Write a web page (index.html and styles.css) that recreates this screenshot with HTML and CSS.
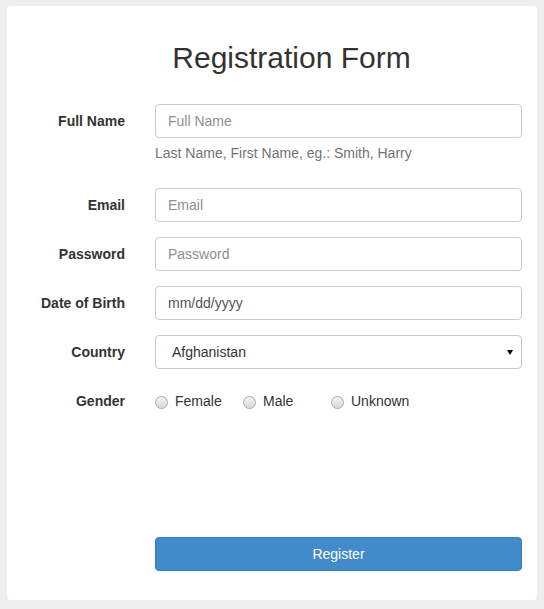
FILE: index.html
```html
<!DOCTYPE html>
<html>
<head>
<meta charset="utf-8">
<link rel="stylesheet" href="styles.css">
</head>
<body>
<div class="card">
  <h2 class="title">Registration Form</h2>
  <form class="form">
    <div class="row">
      <label class="lbl">Full Name</label>
      <div class="ctl">
        <input class="input" type="text" placeholder="Full Name">
        <span class="help">Last Name, First Name, eg.: Smith, Harry</span>
      </div>
    </div>
    <div class="row">
      <label class="lbl">Email</label>
      <div class="ctl"><input class="input" type="text" placeholder="Email"></div>
    </div>
    <div class="row">
      <label class="lbl">Password</label>
      <div class="ctl"><input class="input" type="text" placeholder="Password"></div>
    </div>
    <div class="row">
      <label class="lbl">Date of Birth</label>
      <div class="ctl"><div class="input date">mm/dd/yyyy</div></div>
    </div>
    <div class="row">
      <label class="lbl">Country</label>
      <div class="ctl"><div class="input select"><span>Afghanistan</span><span class="caret"></span></div></div>
    </div>
    <div class="row gender">
      <label class="lbl">Gender</label>
      <div class="ctl radios">
        <span class="radio"><span class="dot"></span>Female</span>
        <span class="radio"><span class="dot"></span>Male</span>
        <span class="radio"><span class="dot"></span>Unknown</span>
      </div>
    </div>
    <div class="row submit">
      <div class="lbl"></div>
      <div class="ctl"><button type="button" class="btn">Register</button></div>
    </div>
  </form>
</div>
</body>
</html>
```
FILE: styles.css
```css
html, body {
  margin: 0;
  padding: 0;
  background: #eeeeee;
}
body {
  padding: 6px 7px 8px 7px;
  font-family: "Liberation Sans", Arial, sans-serif;
  font-size: 14px;
  line-height: 20px;
  color: #333333;
}
.card {
  width: 530px;
  height: 594px;
  background: #ffffff;
  border-radius: 4px;
  box-sizing: border-box;
}
.title {
  margin: 0;
  padding-top: 35px;
  padding-left: 39px;
  height: 33px;
  line-height: 33px;
  font-size: 30px;
  font-weight: 400;
  text-align: center;
  color: #333333;
}
.form {
  margin-top: 30px;
}
.row {
  display: flex;
  margin-bottom: 15px;
}
.lbl {
  width: 133px;
  box-sizing: border-box;
  padding-right: 15px;
  padding-top: 7px;
  text-align: right;
  font-weight: 700;
  flex: none;
}
.ctl {
  width: 367px;
  padding-left: 15px;
  flex: none;
}
.input {
  display: block;
  width: 100%;
  height: 34px;
  box-sizing: border-box;
  border: 1px solid #cccccc;
  border-radius: 4px;
  padding: 6px 12px;
  font-family: inherit;
  font-size: 14px;
  line-height: 20px;
  color: #555555;
  background: #fff;
  outline: none;
}
.input::placeholder {
  color: #8f8f8f;
}
.date {
  color: #555555;
}
.select {
  display: flex;
  justify-content: space-between;
  align-items: center;
  padding-left: 16px;
  padding-right: 8px;
  color: #333;
}
.caret {
  width: 0;
  height: 0;
  border-left: 3px solid transparent;
  border-right: 3px solid transparent;
  border-top: 5px solid #000;
  margin-top: 1px;
}
.help {
  display: block;
  margin-top: 5px;
  margin-bottom: 10px;
  color: #737373;
}
.radios {
  display: flex;
  padding-top: 7px;
  height: 20px;
}
.radio {
  display: flex;
  align-items: center;
  width: 88px;
  color: #333;
}
.radio:last-child {
  width: auto;
}
.dot {
  width: 11px;
  height: 11px;
  border-radius: 50%;
  border: 1px solid #a9a9a9;
  background: linear-gradient(#f4f4f4, #dadada);
  margin-right: 7px;
  margin-top: 2px;
}
.submit {
  margin-top: 126px;
}
.submit .lbl {
  padding-top: 0;
}
.btn {
  display: block;
  width: 100%;
  height: 34px;
  border: 1px solid #357ebd;
  border-radius: 4px;
  background: #428bca;
  color: #fff;
  font-family: inherit;
  font-size: 14px;
  line-height: 20px;
  padding: 6px 12px;
}
```
